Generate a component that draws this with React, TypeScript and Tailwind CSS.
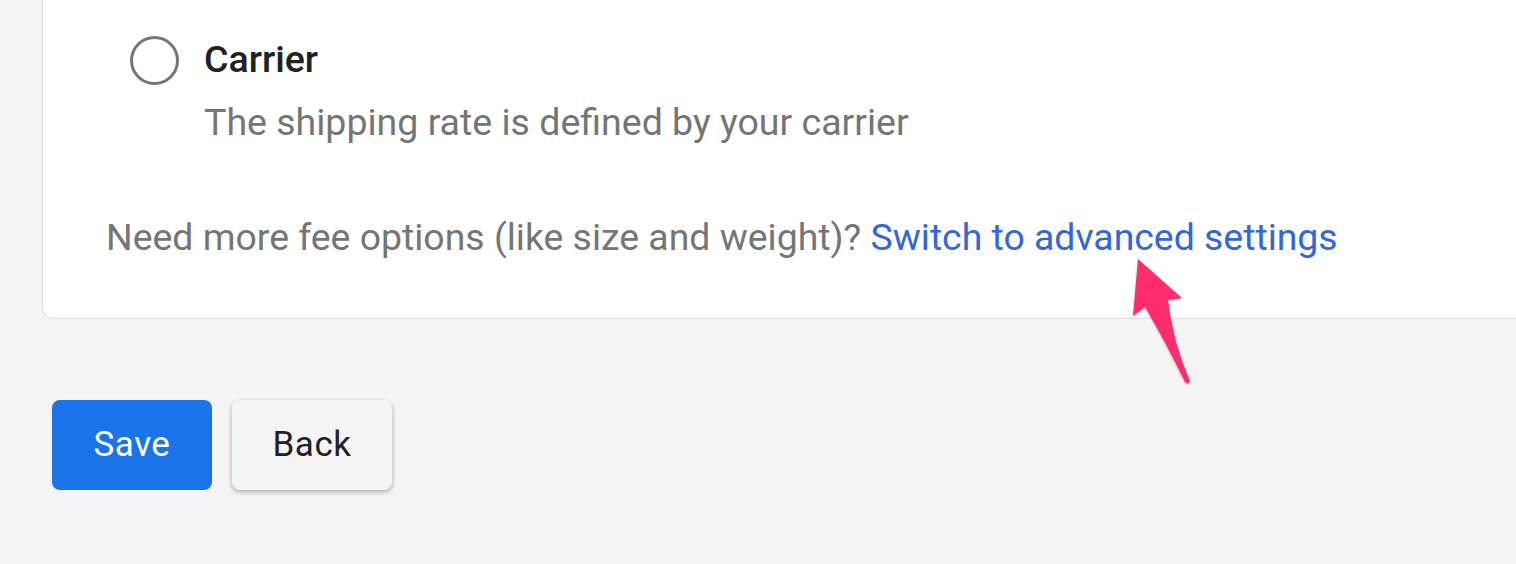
import React from "react";

// pink annotation arrow pointing at the link
function Arrow() {
  return (
    <svg
      className="absolute left-[1128px] top-[255px] drop-shadow-[0_1px_1px_rgba(0,0,0,0.25)]"
      width="70"
      height="135"
      viewBox="0 0 70 135"
    >
      <path
        d="M10 4 L54 43 L40 45 Q45 88 62 126 Q60 130 57 127 Q38 88 17 52 L5 61 Z"
        fill="#ff2d6e"
      />
    </svg>
  );
}

export default function App() {
  return (
    <div
      className="relative h-[564px] w-full overflow-hidden bg-[#f4f4f4]"
      style={{ fontFamily: "Roboto, 'Liberation Sans', sans-serif" }}
    >
      {/* Card */}
      <div className="ml-[42px] rounded-bl-[12px] border-b border-l border-[#dcdcdc] bg-white pt-[35px] pb-[57px] pl-[63px]">
        <div className="ml-[24px] flex items-start gap-[25px]">
          <div className="mt-[1px] h-[49px] w-[49px] shrink-0 rounded-full border-[3.5px] border-[#757575]" />
          <div>
            <div className="text-[37.5px] leading-[48px] font-medium text-[#202124]">Carrier</div>
            <div className="mt-[15px] text-[37.5px] leading-[48px] text-[#757575]">
              The shipping rate is defined by your carrier
            </div>
          </div>
        </div>
        <p className="mt-[67px] text-[37.4px] leading-[48px] text-[#757575]">
          Need more fee options (like size and weight)?{" "}
          <a className="text-[#3367d6]">Switch to advanced settings</a>
        </p>
      </div>

      {/* Actions */}
      <div className="mt-[81px] ml-[52px] flex gap-[20px]">
        <button className="h-[90px] w-[160px] rounded-[8px] bg-[#1a73e8] text-[35px] font-normal tracking-[0.5px] text-white">
          Save
        </button>
        <button className="h-[90px] w-[160px] rounded-[8px] bg-[#f4f4f4] text-[35px] font-normal tracking-[0.5px] text-[#202124] shadow-[0_2px_5px_rgba(0,0,0,0.3)]">
          Back
        </button>
      </div>

      <Arrow />
    </div>
  );
}
